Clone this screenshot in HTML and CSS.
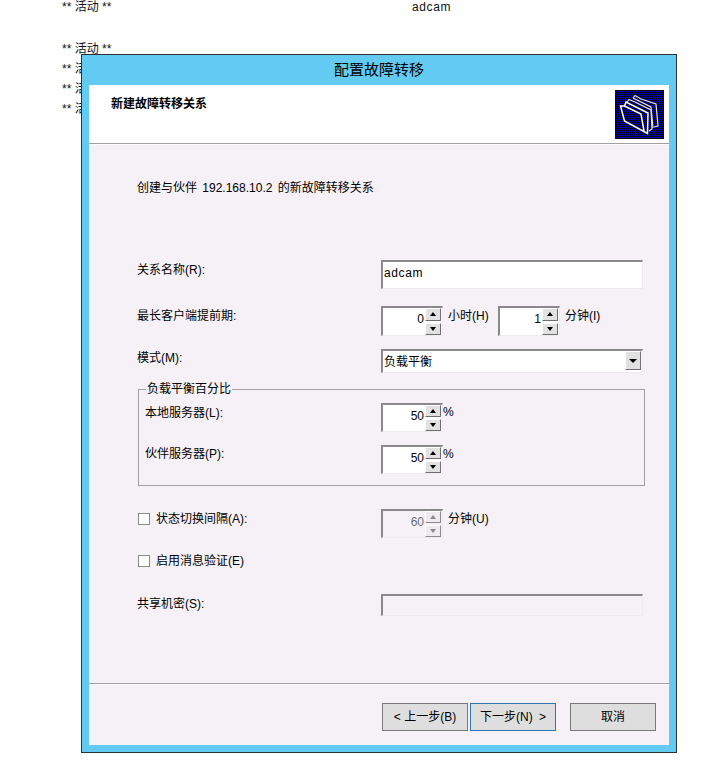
FILE: index.html
```html
<!DOCTYPE html>
<html lang="zh-CN">
<head>
    <meta charset="UTF-8">
    <title>配置故障转移</title>
    <link rel="stylesheet" href="styles.css">
</head>
<body>
    <div class="doc-row doc-row-first"><span class="doc-key">** 活动 **</span><span class="latin">adcam</span></div>
    <div class="doc-row"><span class="doc-key">** 活动 **</span></div>
    <div class="doc-row"><span class="doc-key">** 活动 **</span></div>
    <div class="doc-row"><span class="doc-key">** 活动 **</span></div>
    <div class="doc-row"><span class="doc-key">** 活动 **</span></div>

    <div class="window">
        <div class="titlebar">配置故障转移</div>
        <div class="client">
            <div class="header">
                <div class="header-title">新建故障转移关系</div>
                <svg class="header-icon" width="49" height="49" viewBox="0 0 49 49">
                    <defs>
                        <pattern id="dither" width="2" height="2" patternUnits="userSpaceOnUse">
                            <rect width="2" height="2" fill="#000"/>
                            <rect width="1" height="1" fill="#0000b0"/>
                            <rect x="1" y="1" width="1" height="1" fill="#0000b0"/>
                        </pattern>
                    </defs>
                    <rect width="49" height="49" fill="url(#dither)"/>
                    <g fill="none" stroke="#e8e8e8" stroke-width="1.2">
                        <path d="M18 8 L20 5.5 L26 9 L41 14 L43 36 L39 37"/>
                        <path d="M18 8 L36 17 L38 38"/>
                        <path d="M12 12 L14 9.5 L20 12 L36 20 L37 39 L34 41"/>
                    </g>
                    <path d="M9.5 16 L11 12 L27 20 L33 23 L32.5 43.5 L9.5 31 L5.5 16 L9.5 16 L26 24 L29 41" fill="none" stroke="#fff" stroke-width="1.5"/>
                </svg>
            </div>

            <div class="content">
                <div class="intro">创建与伙伴 192.168.10.2 的新故障转移关系</div>

                <div class="row row-name">
                    <label class="row-label">关系名称(R):</label>
                    <input class="field field-name" type="text" value="adcam">
                </div>

                <div class="row row-lease">
                    <label class="row-label">最长客户端提前期:</label>
                    <div class="row-fields">
                        <div class="spin spin-tall">
                            <div class="spin-value">0</div>
                            <div class="spin-btns"><span class="spin-btn up"></span><span class="spin-btn down"></span></div>
                        </div>
                        <span class="unit">小时(H)</span>
                        <div class="spin spin-tall">
                            <div class="spin-value">1</div>
                            <div class="spin-btns"><span class="spin-btn up"></span><span class="spin-btn down"></span></div>
                        </div>
                        <span class="unit">分钟(I)</span>
                    </div>
                </div>

                <div class="row row-mode">
                    <label class="row-label row-label-flush">模式(M):</label>
                    <div class="combo">
                        <div class="combo-value">负载平衡</div>
                        <span class="combo-btn down"></span>
                    </div>
                </div>

                <fieldset class="group">
                    <legend>负载平衡百分比</legend>
                    <div class="group-row">
                        <label class="row-label">本地服务器(L):</label>
                        <div class="row-fields">
                            <div class="spin">
                                <div class="spin-value">50</div>
                                <div class="spin-btns"><span class="spin-btn up"></span><span class="spin-btn down"></span></div>
                            </div>
                            <span class="percent">%</span>
                        </div>
                    </div>
                    <div class="group-row group-row-second">
                        <label class="row-label row-label-flush">伙伴服务器(P):</label>
                        <div class="row-fields">
                            <div class="spin">
                                <div class="spin-value">50</div>
                                <div class="spin-btns"><span class="spin-btn up"></span><span class="spin-btn down"></span></div>
                            </div>
                            <span class="percent">%</span>
                        </div>
                    </div>
                </fieldset>

                <div class="row row-state">
                    <label class="row-label check-label"><input class="check" type="checkbox">状态切换间隔(A):</label>
                    <div class="row-fields">
                        <div class="spin spin-disabled">
                            <div class="spin-value">60</div>
                            <div class="spin-btns"><span class="spin-btn up"></span><span class="spin-btn down"></span></div>
                        </div>
                        <span class="unit">分钟(U)</span>
                    </div>
                </div>

                <div class="row row-auth">
                    <label class="check-label"><input class="check" type="checkbox">启用消息验证(E)</label>
                </div>

                <div class="row row-secret">
                    <label class="row-label">共享机密(S):</label>
                    <input class="field field-secret" type="text" disabled>
                </div>
            </div>

            <div class="footer">
                <button class="btn" type="button">&lt; 上一步(B)</button>
                <button class="btn btn-default" type="button">下一步(N) &gt;</button>
                <button class="btn btn-cancel" type="button">取消</button>
            </div>
        </div>
    </div>
</body>
</html>
```

FILE: styles.css
```css
body {
    margin: 0;
    background-color: #fff;
    color: #000;
    font-family: "Liberation Sans", "Noto Sans CJK SC", sans-serif;
    font-size: 12px;
    line-height: 16px;
}

.latin {
    letter-spacing: 0.6px;
}

/* document text behind the dialog */
.doc-row {
    display: flex;
    padding-left: 62px;
    margin-bottom: 6px;
    line-height: 14px;
    color: #111;
}

.doc-row-first {
    margin-bottom: 28px;
}

.doc-key {
    width: 350px;
}

/* dialog */
.window {
    position: absolute;
    top: 54px;
    left: 81px;
    width: 596px;
    height: 699px;
    box-sizing: border-box;
    display: flex;
    flex-direction: column;
    padding: 0 7px 7px;
    background-color: #63caf2;
    border: 1px solid #2b3338;
}

.titlebar {
    height: 30px;
    line-height: 29px;
    text-align: center;
    font-size: 15px;
    flex-shrink: 0;
}

.client {
    flex: 1;
    display: flex;
    flex-direction: column;
    background-color: #f5f1f6;
}

.header {
    height: 53px;
    display: flex;
    justify-content: space-between;
    padding: 5px 5px 0 22px;
    background-color: #fff;
    border-bottom: 1px solid #a0a0a0;
    box-shadow: 0 1px 0 #fff;
}

.header-title {
    margin-top: 6px;
    font-size: 12px;
    font-weight: bold;
}

.header-icon {
    display: block;
}

.content {
    flex: 1;
    padding: 36px 0 0 48px;
}

.intro {
    word-spacing: 2px;
}

.row,
.group-row {
    display: flex;
    align-items: flex-start;
}

.row-label {
    display: block;
    width: 244px;
    margin-top: 2px;
    flex-shrink: 0;
}

.row-label-flush {
    margin-top: 1px;
}

.group-row .row-label {
    width: 236px;
}

.row-fields {
    display: flex;
    align-items: flex-start;
}

.row-name { margin-top: 64px; }
.row-lease { margin-top: 17px; }
.row-mode { margin-top: 13px; }
.row-state { margin-top: 23px; }
.row-auth { margin-top: 15px; }
.row-secret { margin-top: 25px; }

/* sunken controls */
.field,
.spin,
.combo {
    box-sizing: border-box;
    border-style: solid;
    border-width: 2px 1px 1px 2px;
    border-color: #8a8a8a #eeeaef #eeeaef #8a8a8a;
    background-color: #fff;
}

.field {
    display: block;
    width: 262px;
    margin: 0;
    font: inherit;
    color: #000;
    outline: none;
}

.field-name {
    height: 29px;
    padding: 0 0 4px 1px;
    letter-spacing: 0.6px;
}

.field-secret {
    height: 22px;
    padding: 0;
    background-color: #f5f1f6;
}

.spin {
    display: flex;
    width: 62px;
    height: 29px;
}

.spin-tall {
    height: 30px;
}

.spin-value {
    flex: 1;
    text-align: right;
    padding: 3px 1px 0 0;
}

.spin-btns {
    width: 16px;
    display: flex;
    flex-direction: column;
    gap: 2px;
    flex-shrink: 0;
    margin-right: 1px;
}

.spin-btn,
.combo-btn {
    display: flex;
    align-items: center;
    justify-content: center;
    box-sizing: border-box;
    background-color: #e1e1e1;
    border-style: solid;
    border-width: 1px;
    border-color: #fff #6e6e6e #6e6e6e #fff;
}

.spin-btn {
    flex: 1;
}

.up::before,
.down::before {
    content: "";
    border-left: 3px solid transparent;
    border-right: 3px solid transparent;
}

.up::before {
    border-bottom: 4px solid #000;
}

.down::before {
    border-top: 4px solid #000;
}

.spin-disabled,
.spin-disabled .spin-value {
    background-color: #f5f1f6;
    color: #6d6d6d;
}

.spin-disabled .spin-btn {
    background-color: #eeeaef;
    border-color: #fff #8c8c8c #8c8c8c #fff;
}

.spin-disabled .up::before {
    border-bottom-color: #8c8c8c;
}

.spin-disabled .down::before {
    border-top-color: #8c8c8c;
}

.unit {
    margin: 2px 0 0 5px;
    width: 50px;
}

.percent {
    margin-top: 1px;
}

.combo {
    display: flex;
    width: 262px;
    height: 24px;
}

.combo-value {
    flex: 1;
    padding: 3px 0 0 1px;
}

.combo-btn {
    width: 16px;
    height: 19px;
    margin-right: 1px;
}

.combo-btn::before {
    border-left-width: 4px;
    border-right-width: 4px;
}

/* percent group */
.group {
    width: 507px;
    box-sizing: border-box;
    margin: 8px 0 0 1px;
    padding: 6px 0 11px 6px;
    border: 1px solid #a0a0a0;
}

.group legend {
    margin-left: 1px;
    padding: 0 1px;
}

.group-row-second {
    margin-top: 13px;
}

.check-label {
    display: flex;
    align-items: center;
}

.check {
    appearance: none;
    box-sizing: border-box;
    width: 12px;
    height: 12px;
    margin: 0 6px 0 1px;
    background-color: #fff;
    border: 1px solid #8a8a8a;
}

/* bottom buttons */
.footer {
    height: 62px;
    box-sizing: border-box;
    display: flex;
    justify-content: flex-end;
    align-items: flex-start;
    gap: 2px;
    padding: 19px 13px 0 0;
    border-top: 1px solid #a0a0a0;
    box-shadow: inset 0 1px 0 #fff;
}

.btn {
    width: 86px;
    height: 28px;
    padding: 0;
    font: inherit;
    color: #000;
    background-color: #dedede;
    border: 1px solid #7a7a7a;
}

.btn-default {
    border-color: #2f75b0;
    word-spacing: 3px;
}

.btn-cancel {
    margin-left: 12px;
}
```
